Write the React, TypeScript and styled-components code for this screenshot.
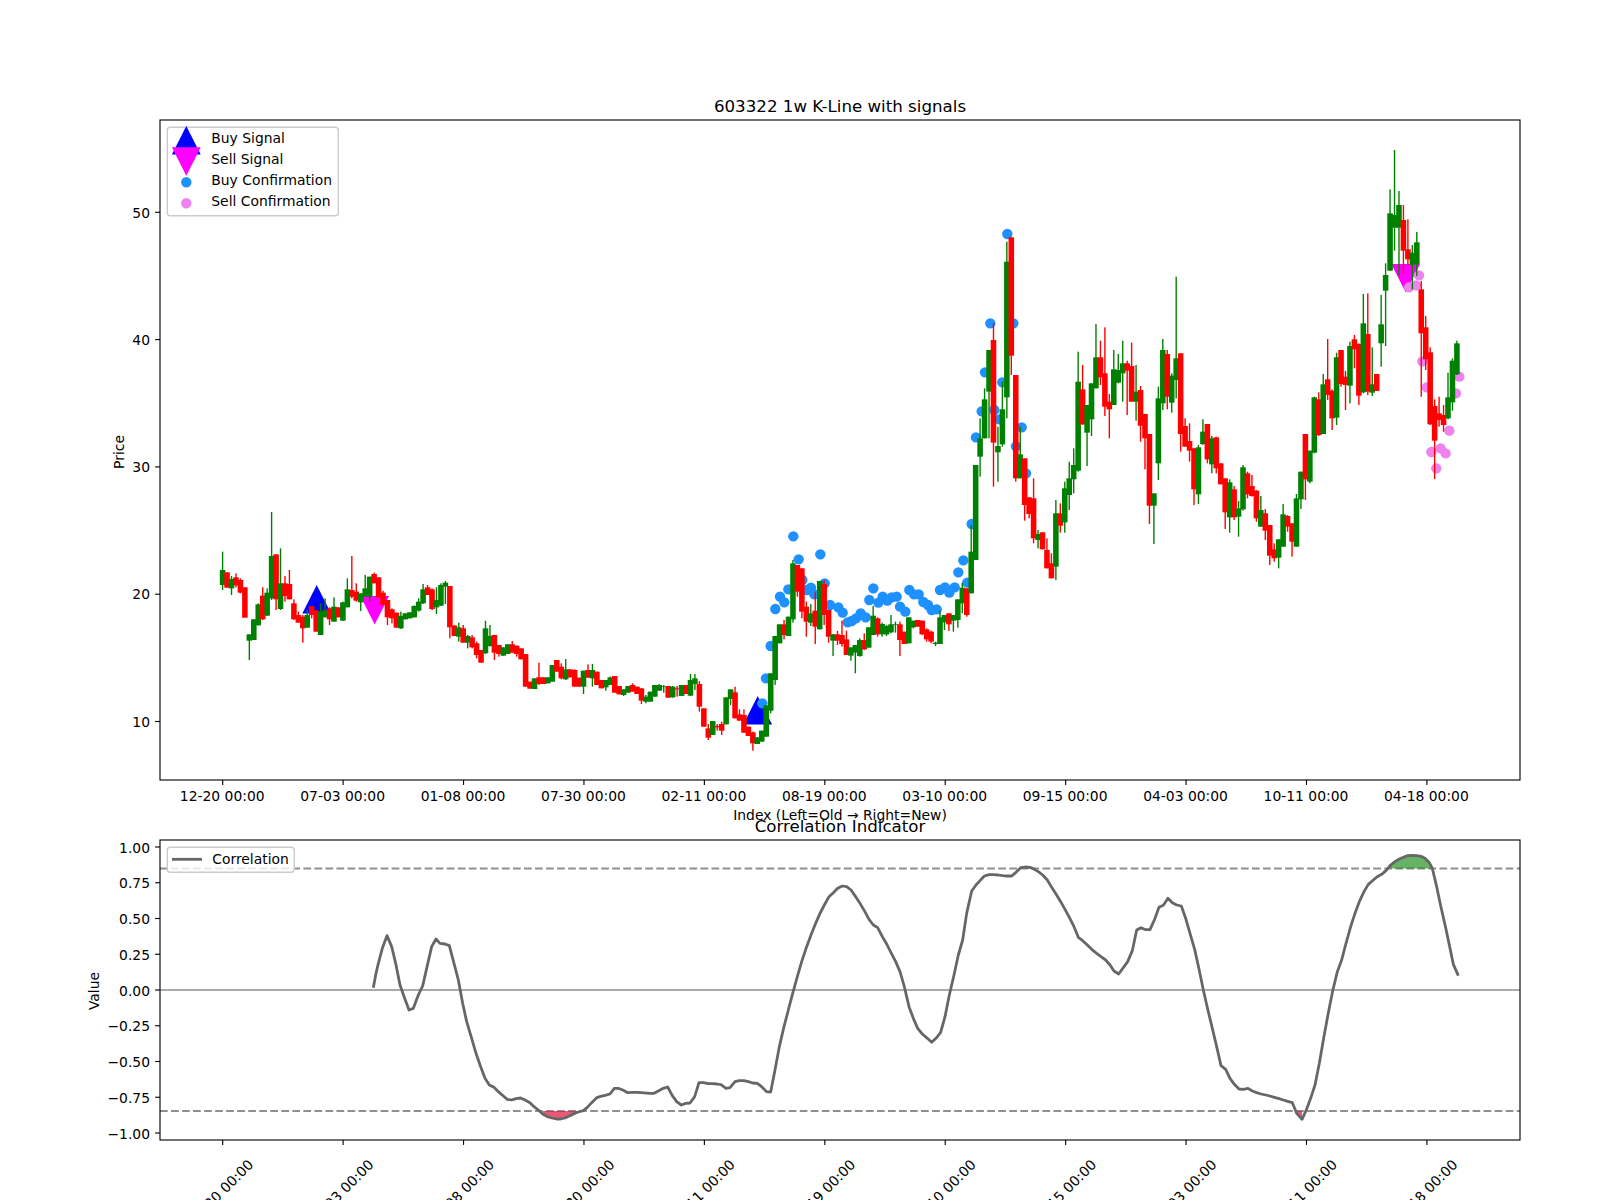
import React from 'react';
import styled, { createGlobalStyle } from 'styled-components';

const Global = createGlobalStyle`
  html, body { margin: 0; padding: 0; background: #fff; overflow: hidden; }
`;

const Figure = styled.main`
  width: 1600px;
  height: 1200px;
  overflow: hidden;
  background: #fff;
`;

const Plot = styled.svg`
  display: block;
  width: 1600px;
  height: 1200px;
  font-family: "DejaVu Sans", "Liberation Sans", sans-serif;
`;

const Title = styled.text`
  font-size: 16.67px;
  fill: #000;
  text-anchor: middle;
`;

const AxisLabel = styled.text`
  font-size: 13.89px;
  fill: #000;
  text-anchor: middle;
`;

const TickText = styled.text<{ $anchor?: string }>`
  font-size: 13.89px;
  fill: #000;
  text-anchor: ${(p) => p.$anchor || 'middle'};
`;

const LegendText = styled.text`
  font-size: 13.89px;
  fill: #000;
`;

const Spine = styled.rect`
  fill: none;
  stroke: #000;
  stroke-width: 1.11px;
`;

const Tick = styled.line`
  stroke: #000;
  stroke-width: 1.11px;
`;

const LegendFrame = styled.rect`
  fill: #fff;
  fill-opacity: 0.8;
  stroke: #ccc;
  stroke-width: 1.39px;
`;

const RefLine = styled.line<{ $dashed?: boolean }>`
  stroke: ${(p) => (p.$dashed ? '#8f8f8f' : '#aaaaaa')};
  stroke-width: 2.08px;
  stroke-dasharray: ${(p) => (p.$dashed ? '7.7 3.33' : 'none')};
`;

const CorrLine = styled.polyline`
  fill: none;
  stroke: #666;
  stroke-width: 2.78px;
  stroke-linejoin: round;
`;

const GREEN = '#008000';
const RED = '#ff0000';
const xOf = (i: number) => 222.6 + 4.456 * i;
const tickX = (k: number) => 222.7 + 4.46 * 27 * k;

type Candle = { i: number; c: string; w: number; b: number; B: number; W: number };

function parse(start: number, y0: number, s: string): Candle[] {
  return s
    .trim()
    .split(/\s+/)
    .map((tok, k) => {
      const c = tok[0] === 'g' ? GREEN : RED;
      const [w, b, B, W] = tok.slice(1).split(',').map((n) => y0 + Number(n) / 3);
      return { i: start + k, c, w, b, B, W };
    });
}

const candles: Candle[] = [
  ...parse(0, 500, `g155,210,255,270 r217,217,263,263 g228,237,265,285 r220,232,256,262 r235,240,278,280 r262,262,353,353
  g403,403,422,480 g358,358,420,420 g310,313,376,376 r262,287,358,360 g265,278,347,348 g36,168,295,300 r163,163,298,330
  g145,250,327,330 r228,250,288,305 r210,252,298,298 r298,310,358,360 r335,345,368,368 r345,350,385,428 g330,345,383,383
  r318,318,345,355 r330,332,395,395 g310,335,405,405 g295,330,352,352 r322,325,358,375 g292,320,365,365 r322,322,352,352
  g305,307,362,362 g235,268,322,322 r168,270,290,295 r250,275,302,305 g280,280,307,333 g225,265,290,290 g230,230,290,305
  r218,222,250,250 r232,232,292,292 r272,278,315,315 r300,300,352,375 r325,328,355,370 r338,338,383,383 g335,348,385,387
  g340,340,358,358 g337,337,355,355 g316,318,352,352 g295,305,332,335 g252,268,310,312 r255,262,285,285 r265,268,327,330
  g262,300,322,342 g250,255,317,318 g243,248,260,312 r258,258,382,415 r375,377,408,408 g368,382,410,425 r375,385,428,428
  g405,408,428,445 r405,412,442,445 r425,430,465,475 r450,450,488,488 g362,385,460,462 g375,408,438,440`),
  ...parse(61, 630, `r15,15,68,90 r45,45,72,80 g52,52,77,77 g43,43,72,72 r33,43,68,68 r47,47,72,80 r55,55,88,88 r72,72,170,170
  r155,155,176,176 g145,145,177,177 r98,142,162,165 r142,142,162,162 g142,142,160,160 g105,105,155,155 r90,90,125,125
  r100,110,145,148 g87,118,148,150 r118,118,142,142 r118,120,170,170 r143,143,170,170 g122,122,170,192 r103,120,143,143
  g102,120,145,170 r125,125,165,165 r150,150,175,175`),
  ...parse(86, 600, `g240,240,262,272 g230,232,255,255 r228,228,278,278 r258,258,283,283 g268,268,285,288 g258,258,278,278 r250,255,275,275
  r260,260,282,282 r265,265,302,312 g285,290,305,310 g275,275,305,305 g255,255,290,290 g252,255,272,272 g255,258,260,278
  r258,258,293,293 g258,260,292,293 r258,265,268,290 g255,255,288,288 r255,255,282,282 g222,240,287,288 g222,235,252,270
  r243,252,320,335 r325,325,380,380 r372,385,413,420 g363,363,405,405 r372,378,382,392 r365,372,392,405 g292,292,373,373
  g268,268,297,315 r260,277,355,355 r328,343,362,362 r328,345,398,398 r380,380,408,408 r395,397,430,452 g412,412,432,432
  g392,392,425,425 g316,316,410,410 g220,220,332,340`),
  ...parse(124, 500, `g408,408,540,555 g373,373,430,430 r360,373,405,418 g350,350,408,408 g180,190,358,368 r195,195,275,290 r205,205,335,355
  r305,320,365,410 g312,340,368,378 r275,332,380,432 g243,243,388,388 r240,252,345,375 r330,330,410,428 g402,403,422,468
  r393,403,422,435 r362,405,432,440 r392,418,465,465 g442,442,467,482 g435,435,458,520 g415,420,468,470 r400,420,448,450
  g382,382,443,443 g318,347,405,405 r352,355,403,410 g368,372,403,410 g375,378,403,408 g345,373,397,400 g365,372,374,398
  r365,373,420,468 r395,395,432,430 g352,352,430,430 g362,362,382,385 r360,360,380,380 r362,362,403,405 r385,388,418,425
  r392,395,425,430 g425,428,432,438 g332,352,432,432 g345,345,367,390 r340,340,373,393 g345,345,362,395 g298,298,360,383
  g248,263,310,340 r265,265,345,350`),
  ...parse(168, 210, `g945,1025,1150,1150 g765,765,1050,1050 g625,685,740,800 g535,568,685,685 g420,420,545,685 r340,390,698,830 g650,708,727,815
  g515,598,703,710 g95,155,562,625 r82,82,437,495 r495,495,805,815 g650,733,805,805 r745,745,885,932 r862,862,912,925
  r805,865,985,1000 g960,972,990,1015 r967,967,1018,1018 r985,1020,1075,1075 r1030,1060,1105,1105 g870,910,1070,1110
  r880,910,947,968 g815,835,937,968 g755,805,855,900 g715,765,808,850 g425,515,782,785 r465,538,643,645 g585,585,668,768
  g520,520,628,678 g342,442,535,535 r392,442,502,525 r352,490,590,618 r552,575,598,685 g420,478,585,585 g432,480,518,520
  g392,460,490,575 r452,460,482,615 r398,468,575,575 g465,545,575,632 r528,540,647,695 r612,612,685,778 r672,672,887,942
  g850,850,887,1002 g530,565,760,810 g387,420,580,600 r420,432,560,598 g490,497,578,608 g200,445,510,565 r430,430,672,725
  r625,648,710,710 r640,693,722,755 r713,715,838,885 g705,712,853,882`),
  ...parse(220, 130, `g868,905,942,945 r882,882,988,1000 g918,925,1003,1030 r920,922,1015,1030 r1000,1000,1063,1063 r1045,1045,1147,1197
  g1048,1057,1162,1208 r1068,1078,1162,1170 g1113,1135,1160,1220 g1005,1012,1138,1142 r1025,1030,1093,1105 r1035,1068,1098,1100
  r1080,1082,1165,1175 g1098,1140,1190,1190 r1137,1150,1202,1230 r1185,1185,1277,1305 r1240,1258,1285,1295 g1228,1228,1283,1315
  g1122,1153,1250,1250 r1155,1158,1190,1205 r1180,1180,1235,1280 g1092,1105,1250,1250 g1025,1025,1108,1137 r912,912,1048,1110
  g962,962,1055,1060 g800,802,968,970 r787,808,915,918 g732,763,912,912 r627,748,795,810 r778,782,865,900 g668,682,863,885
  r660,660,762,770 r723,740,765,840 g635,648,767,820 r615,628,658,715 r640,642,797,825 g492,580,787,790 r490,612,785,795
  g652,763,788,798 r732,732,783,783 g495,583,640,710 g400,435,482,648 g178,250,422,422 g60,255,293,362 g183,225,293,437
  r225,270,362,430 r268,358,388,405 g345,368,405,478 g306,337,402,438 r453,478,610,800 r558,592,688,720 r652,667,883,885
  r808,828,932,1047 r800,850,870,890 r825,855,885,905 g728,802,865,868 g685,692,817,842 g632,640,733,735`),
];

const z = (x0: number, y0: number, list: number[][]) => list.map(([x, y]) => [x0 + x / 3, y0 + y / 3]);

const blueDots = [
  ...z(530, 600, [[697, 310]]),
  ...z(750, 500, [
    [62, 438], [48, 535], [76, 327], [90, 290], [103, 307], [115, 268], [130, 109], [146, 178], [157, 240], [170, 270], [183, 263],
    [193, 283], [211, 163], [224, 250], [240, 315], [265, 322], [278, 338], [293, 367], [305, 363], [318, 355], [332, 340], [347, 352],
    [358, 300], [370, 265], [385, 308], [398, 290], [412, 302], [425, 292], [440, 290], [450, 320], [466, 335], [478, 270], [492, 283],
    [506, 283], [520, 306], [534, 315], [545, 330], [560, 328], [570, 270], [585, 262], [598, 278], [614, 262], [625, 217], [640, 181],
    [652, 248], [665, 72],
  ]),
  ...z(950, 210, [
    [172, 72], [121, 340], [190, 340], [105, 487], [157, 517], [215, 652], [198, 709], [228, 790], [95, 604], [133, 600], [148, 628], [78, 682],
  ]),
];

const pinkDots = z(1200, 130, [
  [657, 436], [627, 472], [648, 466], [667, 694], [680, 772], [778, 740], [768, 790], [748, 902], [694, 966], [722, 955], [737, 970], [709, 1015],
]);

const corr = [
  ...z(150, 770, [
    [670, 653], [678, 610], [685, 580], [697, 535], [711, 497], [725, 530], [737, 580], [750, 645], [764, 685], [777, 720], [790, 715], [805, 675],
    [818, 648], [830, 595], [845, 530], [858, 507], [870, 520], [885, 522], [898, 527], [912, 580], [925, 630], [938, 700], [950, 755], [965, 805],
    [978, 850], [992, 890], [1005, 925], [1018, 945], [1032, 952], [1045, 965], [1060, 978], [1072, 988], [1085, 990], [1098, 986], [1112, 984],
    [1125, 990], [1140, 998], [1152, 1010], [1165, 1020], [1178, 1032], [1192, 1040], [1205, 1044], [1220, 1047], [1232, 1047], [1245, 1044],
    [1258, 1038], [1272, 1031], [1285, 1026], [1300, 1022], [1312, 1012], [1325, 998], [1340, 983], [1352, 979], [1365, 976], [1380, 972],
    [1393, 955], [1405, 955], [1420, 961], [1433, 968], [1447, 967], [1460, 967], [1473, 968],
  ]),
  ...z(650, 830, [
    [0, 790], [12, 790], [25, 783], [40, 775], [53, 771], [67, 797], [80, 815], [94, 825], [107, 820], [120, 819], [134, 800], [147, 758], [160, 758],
    [175, 761], [188, 761], [200, 762], [213, 764], [228, 775], [240, 773], [255, 755], [268, 752], [282, 752], [295, 755], [308, 759], [322, 760],
    [335, 770], [350, 785], [362, 786], [375, 720], [388, 650], [402, 590], [415, 540], [428, 490], [442, 440], [455, 395], [470, 350], [483, 315],
    [497, 280], [510, 250], [523, 225], [537, 200], [550, 188], [563, 175], [577, 168], [590, 170], [603, 180], [617, 200], [630, 220], [643, 242],
    [657, 268], [670, 285], [683, 293], [697, 320], [710, 342], [723, 368], [737, 395], [750, 425], [763, 470], [777, 530], [790, 565], [803, 595],
    [817, 612], [832, 625], [845, 637], [858, 625], [872, 607], [885, 560], [898, 495], [912, 435], [925, 375], [938, 330], [950, 250], [965, 183],
    [978, 165], [990, 152], [1003, 138], [1017, 134], [1030, 134], [1045, 135], [1058, 137], [1072, 138], [1085, 138], [1098, 127], [1112, 113],
    [1125, 111], [1140, 112], [1153, 118], [1165, 125], [1178, 135], [1192, 150], [1205, 172], [1218, 192], [1232, 215], [1245, 238], [1258, 262],
    [1272, 290], [1285, 322], [1298, 332], [1312, 345], [1325, 358], [1340, 370], [1353, 380], [1367, 390], [1380, 405], [1392, 423], [1406, 432],
  ]),
  ...z(1120, 830, [
    [10, 413], [23, 395], [37, 362], [50, 300], [63, 293], [77, 299], [90, 299], [103, 270], [117, 232], [130, 226], [144, 205], [157, 218], [170, 225],
    [184, 228], [197, 265], [210, 310], [224, 358], [237, 417], [250, 480], [263, 537], [277, 595], [290, 650], [303, 707], [317, 718], [330, 745],
    [343, 763], [357, 777], [370, 778], [384, 775], [397, 783], [410, 788], [423, 792], [437, 795], [450, 798], [463, 802], [477, 806], [490, 810],
    [503, 814], [517, 818], [530, 850], [546, 868], [558, 842], [572, 805], [585, 765], [598, 700], [611, 625], [625, 548], [638, 483], [652, 425],
    [665, 390], [678, 340], [692, 290], [705, 250], [718, 215], [732, 185], [745, 163], [760, 150], [772, 140], [785, 133], [798, 122], [812, 105],
    [825, 95], [838, 87], [850, 82], [863, 77], [877, 76], [890, 77], [903, 79], [915, 85], [928, 98], [937, 115], [950, 170], [963, 232], [977, 293],
    [990, 355], [1000, 403], [1015, 437],
  ]),
];

const HI = 868.5;
const LO = 1111;

function regions(test: (y: number) => boolean, thr: number): string[] {
  const out: string[] = [];
  let run: number[][] = [];
  const flush = () => {
    if (run.length > 1) {
      out.push(
        [[run[0][0], thr], ...run, [run[run.length - 1][0], thr]].map((p) => p.join(',')).join(' '),
      );
    }
    run = [];
  };
  corr.forEach((p) => (test(p[1]) ? run.push(p) : flush()));
  flush();
  return out;
}

const dates = ['12-20', '07-03', '01-08', '07-30', '02-11', '08-19', '03-10', '09-15', '04-03', '10-11', '04-18'];
const priceTicks = [50, 40, 30, 20, 10];
const corrTicks = [1, 0.75, 0.5, 0.25, 0, -0.25, -0.5, -0.75, -1];
const priceY = (p: number) => 212.3 + (50 - p) * 12.73;
const corrY = (v: number) => 990 - 143 * v;

const up = (x: number, apex: number) => `${x},${apex} ${x - 14.4},${apex + 28.5} ${x + 14.4},${apex + 28.5}`;
const down = (x: number, top: number) => `${x - 14.4},${top} ${x + 14.4},${top} ${x},${top + 28.5}`;

export default function App() {
  return (
    <Figure>
      <Global />
      <Plot viewBox="0 0 1600 1200">
        <Title x={840} y={111.7}>603322 1w K-Line with signals</Title>

        <polygon points={up(316.7, 585)} fill="#0000ff" />
        <polygon points={up(757.7, 696)} fill="#0000ff" />
        <polygon points={down(374.7, 596)} fill="#ff00ff" />
        <polygon points={down(1405.7, 264)} fill="#ff00ff" />
        {blueDots.map(([x, y], k) => (
          <circle key={k} cx={x} cy={y} r={5.2} fill="#1e90ff" />
        ))}
        {pinkDots.map(([x, y], k) => (
          <circle key={k} cx={x} cy={y} r={5.2} fill="#ee82ee" />
        ))}
        {candles.map((d) => {
          const x = xOf(d.i);
          return (
            <g key={d.i} fill={d.c}>
              <rect x={x - 0.7} y={d.w} width={1.39} height={Math.max(0, d.W - d.w)} />
              <rect x={x - 2.78} y={d.b} width={5.56} height={Math.max(0, d.B - d.b)} />
            </g>
          );
        })}

        <Spine x={160} y={120} width={1360} height={660} />
        {priceTicks.map((p) => (
          <g key={p}>
            <Tick x1={155.1} x2={160} y1={priceY(p)} y2={priceY(p)} />
            <TickText $anchor="end" x={150} y={priceY(p) + 5.2}>{p}</TickText>
          </g>
        ))}
        {dates.map((d, k) => {
          const x = tickX(k);
          return (
            <g key={d}>
              <Tick x1={x} x2={x} y1={780} y2={784.9} />
              <TickText x={x - 0.5} y={801}>{`${d} 00:00`}</TickText>
            </g>
          );
        })}
        <AxisLabel x={840} y={820}>Index (Left=Old → Right=New)</AxisLabel>
        <AxisLabel transform="translate(124 452) rotate(-90)">Price</AxisLabel>

        <LegendFrame x={167.3} y={127.3} width={171} height={88.4} rx={3} />
        <polygon points={up(186.3, 126)} fill="#0000ff" />
        <polygon points={down(186.3, 147.3)} fill="#ff00ff" />
        <circle cx={186.3} cy={182.3} r={5.2} fill="#1e90ff" />
        <circle cx={186.3} cy={203.3} r={5.2} fill="#ee82ee" />
        <LegendText x={211.3} y={143.3}>Buy Signal</LegendText>
        <LegendText x={211.3} y={164.3}>Sell Signal</LegendText>
        <LegendText x={211.3} y={185.2}>Buy Confirmation</LegendText>
        <LegendText x={211.3} y={206.2}>Sell Confirmation</LegendText>

        <Title x={840} y={831.7}>Correlation Indicator</Title>
        <RefLine x1={160} x2={1520} y1={990} y2={990} />
        <RefLine $dashed x1={160} x2={1520} y1={HI} y2={HI} />
        <RefLine $dashed x1={160} x2={1520} y1={LO} y2={LO} />
        {regions((y) => y > LO, LO).map((pts) => (
          <polygon key={pts} points={pts} fill="#dc143c" fillOpacity={0.7} />
        ))}
        {regions((y) => y < HI, HI).map((pts) => (
          <polygon key={pts} points={pts} fill="#008000" fillOpacity={0.6} />
        ))}
        <CorrLine points={corr.map((p) => p.join(',')).join(' ')} />

        <Spine x={160} y={840} width={1360} height={300} />
        {corrTicks.map((v) => (
          <g key={v}>
            <Tick x1={155.1} x2={160} y1={corrY(v)} y2={corrY(v)} />
            <TickText $anchor="end" x={150} y={corrY(v) + 5.5}>
              {v < 0 ? `−${Math.abs(v).toFixed(2)}` : v.toFixed(2)}
            </TickText>
          </g>
        ))}
        {dates.map((d, k) => {
          const x = tickX(k);
          return (
            <g key={d}>
              <Tick x1={x} x2={x} y1={1140} y2={1144.9} />
              <TickText transform={`translate(${x - 2} 1192) rotate(-45)`} x={0} y={5}>{`${d} 00:00`}</TickText>
            </g>
          );
        })}
        <AxisLabel transform="translate(99 991) rotate(-90)">Value</AxisLabel>

        <LegendFrame x={167.3} y={847.3} width={127} height={25} rx={3} />
        <line x1={172} x2={202} y1={859.3} y2={859.3} stroke="#666" strokeWidth={2.78} />
        <LegendText x={212.3} y={864.3}>Correlation</LegendText>
      </Plot>
    </Figure>
  );
}
